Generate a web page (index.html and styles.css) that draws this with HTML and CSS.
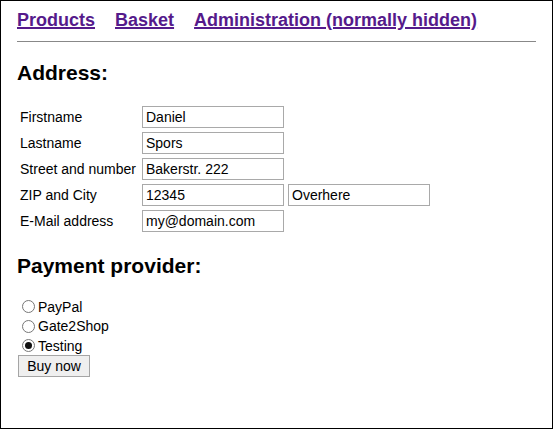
FILE: index.html
```html
<!DOCTYPE html>
<html lang="en">
<head>
    <meta charset="UTF-8">
    <title>Shop - Checkout</title>
    <link rel="stylesheet" href="styles.css">
</head>
<body>
    <div class="page">
        <!-- Top navigation -->
        <nav class="nav">
            <a href="#">Products</a>
            <a href="#">Basket</a>
            <a href="#">Administration (normally hidden)</a>
        </nav>
        <hr class="divider">

        <h2>Address:</h2>
        <form class="checkout">
            <table class="address">
                <tr>
                    <td class="label">Firstname</td>
                    <td><input type="text" value="Daniel"></td>
                    <td></td>
                </tr>
                <tr>
                    <td class="label">Lastname</td>
                    <td><input type="text" value="Spors"></td>
                    <td></td>
                </tr>
                <tr>
                    <td class="label">Street and number</td>
                    <td><input type="text" value="Bakerstr. 222"></td>
                    <td></td>
                </tr>
                <tr>
                    <td class="label">ZIP and City</td>
                    <td><input type="text" value="12345"></td>
                    <td><input type="text" value="Overhere"></td>
                </tr>
                <tr>
                    <td class="label">E-Mail address</td>
                    <td><input type="text" value="my@domain.com"></td>
                    <td></td>
                </tr>
            </table>

            <h2 class="payment-title">Payment provider:</h2>
            <div class="providers">
                <label class="provider"><input type="radio" name="provider" value="paypal">PayPal</label>
                <label class="provider"><input type="radio" name="provider" value="gate2shop">Gate2Shop</label>
                <label class="provider"><input type="radio" name="provider" value="testing" checked>Testing</label>
            </div>
            <button type="button" class="buy-button">Buy now</button>
        </form>
    </div>
</body>
</html>
```

FILE: styles.css
```css
body {
    margin: 0;
    font-family: "Liberation Sans", Arial, sans-serif;
    font-size: 14px;
    color: black;
    background: white;
}
.page {
    box-sizing: border-box;
    width: 553px;
    height: 429px;
    border: 1px solid black;
    padding: 9px 16px 0 16px;
}
/* Navigation */
.nav {
    display: flex;
    gap: 20px;
}
.nav a {
    font-size: 18px;
    font-weight: bold;
    color: #551a8b;
    text-decoration: underline;
    text-decoration-thickness: 2px;
}
.divider {
    margin: 10px 0 0 0;
    border: none;
    border-top: 1px solid #888;
    height: 0;
}
h2 {
    font-size: 21px;
    margin: 19px 0 18px 0;
}
/* Address table */
.address {
    border-spacing: 2px;
}
.address td {
    padding: 1px;
    white-space: nowrap;
}
.address .label {
    width: 118px;
}
.address input {
    box-sizing: border-box;
    width: 142px;
    height: 22px;
    margin: 0;
    padding: 0 3px;
    border: 1px solid #a9a9a9;
    font-family: "Liberation Sans", Arial, sans-serif;
    font-size: 14px;
    color: black;
    display: block;
}
/* Payment providers */
.providers {
    margin-top: 19px;
}
.provider {
    display: flex;
    align-items: center;
    height: 19.5px;
}
.provider input {
    appearance: none;
    box-sizing: border-box;
    width: 13px;
    height: 13px;
    margin: 0 3px 0 5px;
    border: 1px solid #777;
    border-radius: 50%;
    background: white;
    display: flex;
    align-items: center;
    justify-content: center;
}
.provider input:checked::after {
    content: "";
    width: 7px;
    height: 7px;
    border-radius: 50%;
    background: #111;
}
.buy-button {
    box-sizing: border-box;
    height: 22px;
    width: 72px;
    margin: -1px 0 0 1px;
    padding: 0;
    font-family: "Liberation Sans", Arial, sans-serif;
    font-size: 14px;
    color: black;
    background-color: #efefef;
    border: 1px solid #a5a5a5;
    border-radius: 0;
}
```
